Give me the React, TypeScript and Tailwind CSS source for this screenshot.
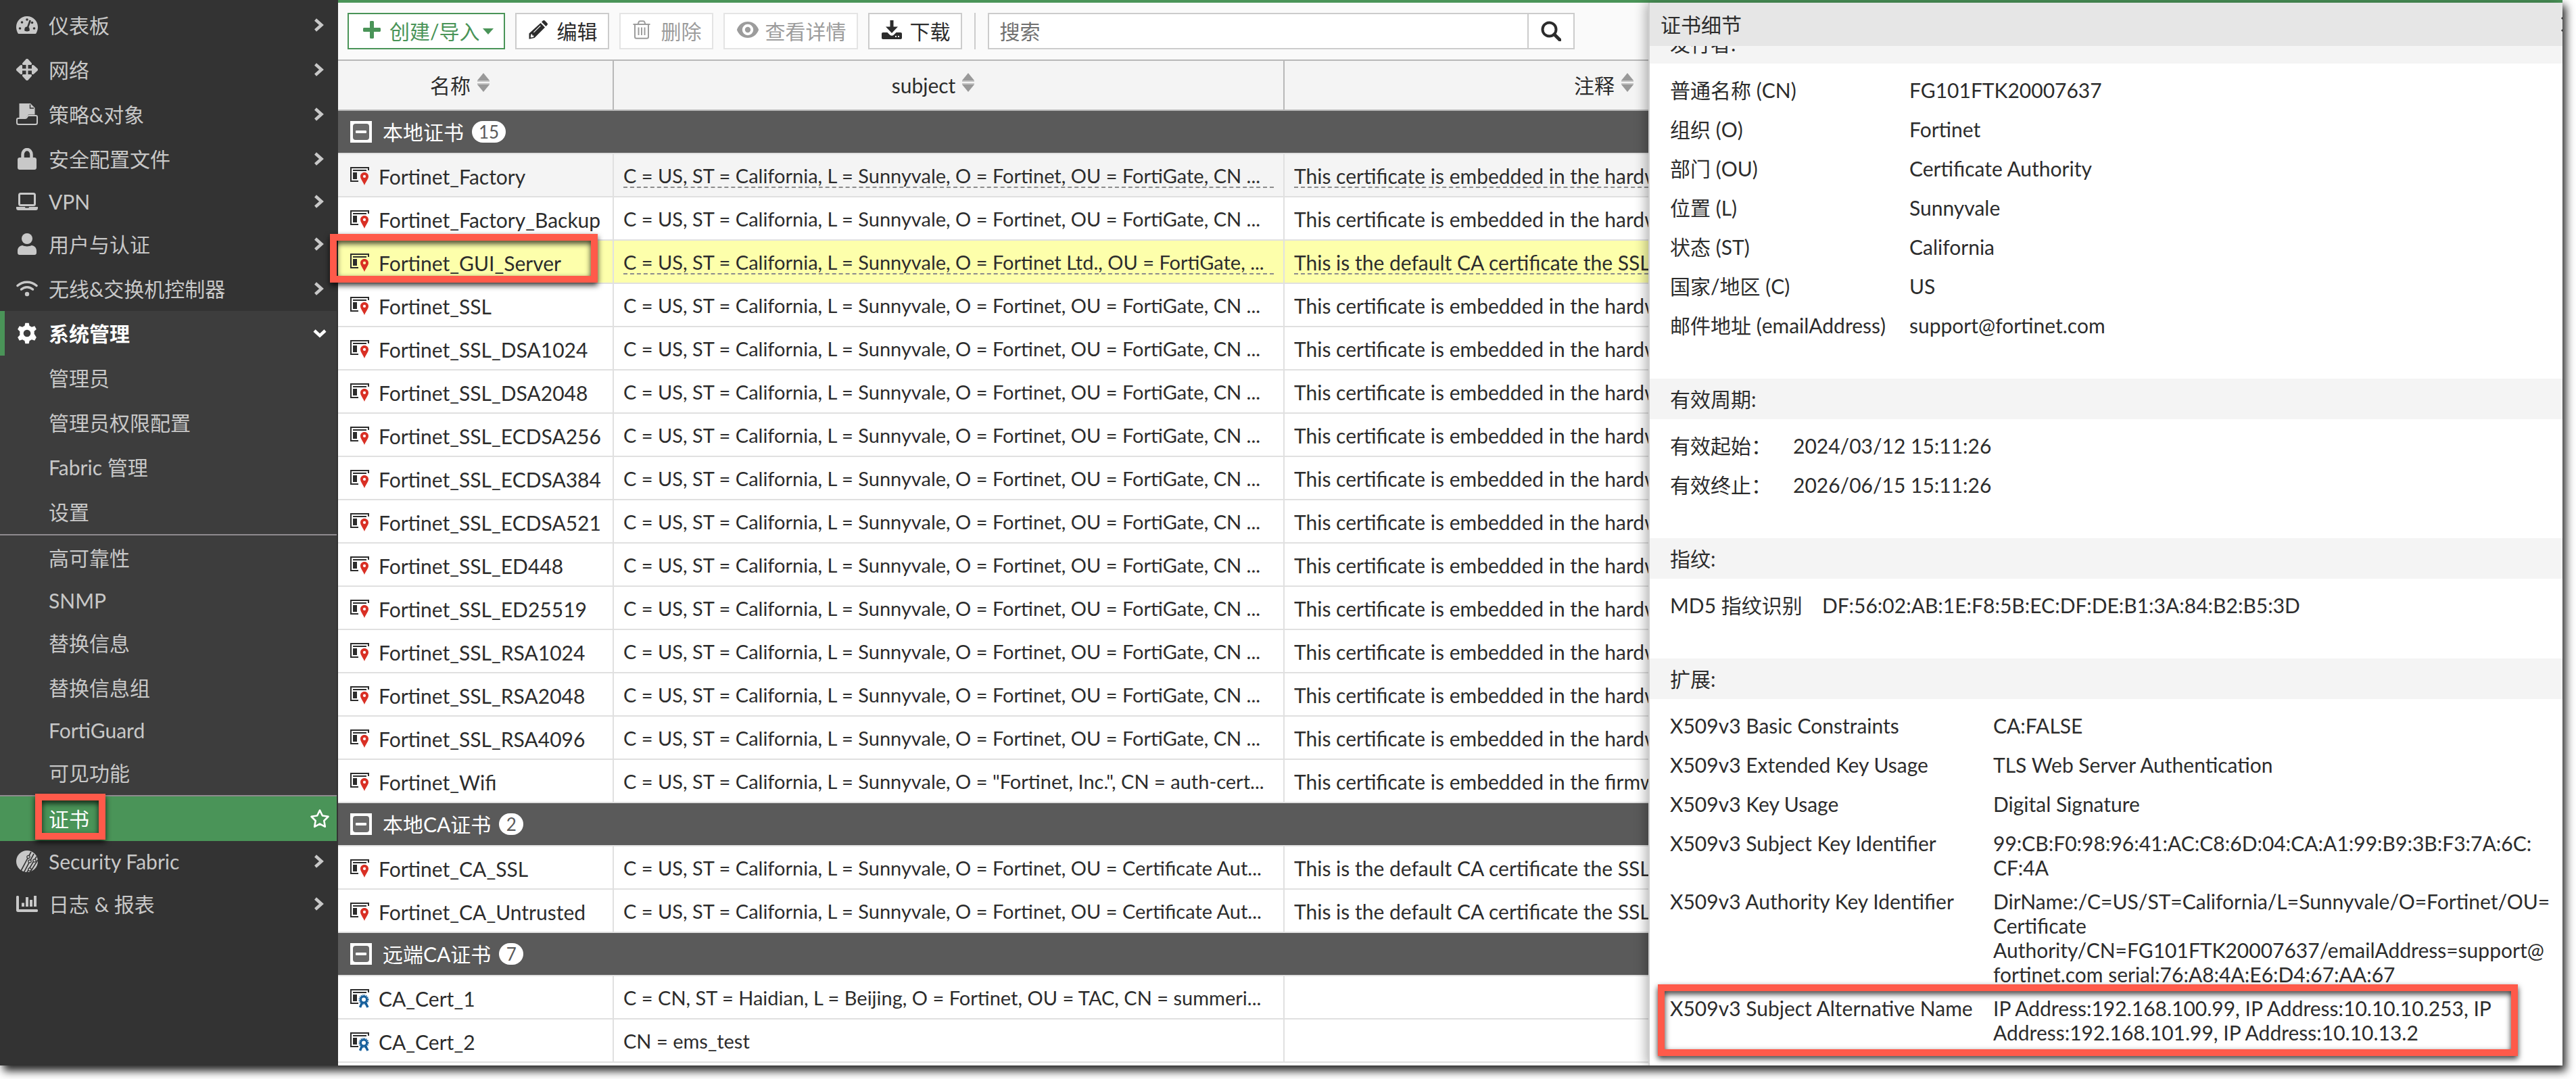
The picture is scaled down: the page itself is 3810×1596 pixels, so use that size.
import type { ReactNode } from "react";

/* ---------- icons ---------- */

const Icon = ({ children }: { children: ReactNode }) => (
  <svg viewBox="0 0 32 32" className="h-8 w-8 shrink-0" fill="currentColor" aria-hidden="true">
    {children}
  </svg>
);

const DashboardIcon = () => (
  <Icon>
    <path d="M16 3C7 3 0 10 0 19c0 3 .8 6 2.2 8.700.4.8 1 1.300 2 1.300h23.600c1 0 1.600-.5 2-1.300C31.200 25 32 22 32 19 32 10 25 3 16 3Z" />
    <g className="fill-[#333333]">
      <circle cx="16" cy="8" r="1.8" />
      <circle cx="8.5" cy="12" r="1.8" />
      <circle cx="23.5" cy="12.5" r="1.8" />
      <circle cx="5.500" cy="21" r="1.8" />
      <circle cx="26.500" cy="21" r="1.8" />
      <circle cx="16" cy="22" r="3.600" />
      <path d="M19.500 8.500 22 9.500 17.800 21h-2.600Z" />
      <path d="M12.500 22h7v3h-7z" />
    </g>
  </Icon>
);

const NetworkIcon = () => (
  <Icon>
    <path d="M14.500 6h3v20h-3zM6 14.500h20v3H6z" />
    <path d="M16 0c1 0 1.500.4 2 1l4.500 5c1.200 1.500.5 3-1 3h-11c-1.500 0-2.200-1.500-1-3L14 1c.5-.6 1-1 2-1ZM16 32c1 0 1.500-.4 2-1l4.500-5c1.200-1.500.5-3-1-3h-11c-1.500 0-2.200 1.500-1 3l4.500 5c.5.6 1 1 2 1ZM0 16c0-1 .4-1.500 1-2l5-4.500c1.500-1.200 3-.5 3 1v11c0 1.500-1.500 2.200-3 1L1 18c-.6-.5-1-1-1-2ZM32 16c0-1-.4-1.500-1-2l-5-4.500c-1.500-1.200-3-.5-3 1v11c0 1.500 1.500 2.200 3 1L31 18c.6-.5 1-1 1-2Z" />
  </Icon>
);

const PolicyIcon = () => (
  <Icon>
    <path d="M4.500 0H21l6.500 6.500V16.500H18l-4 5H4.500Z" />
    <path d="M20.500 1.500v5.500h5.500" fill="none" className="stroke-[#333333]" strokeWidth="1.400" />
    <path
      d="M3 22h10.500c1 0 1.700-.4 2.200-1.300l.8-1.400c.5-.9 1.200-1.300 2.200-1.300H29c1.200 0 2 .8 2 2v8.500c0 1.500-1 2.500-2.500 2.500h-25C2 31 1 30 1 28.500V24c0-1.200.8-2 2-2Z"
      className="fill-[#333333]"
      stroke="currentColor"
      strokeWidth="2"
    />
  </Icon>
);

const LockIcon = () => (
  <Icon>
    <path d="M5 14h22c1.700 0 3 1.300 3 3v12c0 1.700-1.300 3-3 3H5c-1.700 0-3-1.300-3-3V17c0-1.700 1.300-3 3-3Z" />
    <path d="M9.500 16V9.500a6.500 7.500 0 0 1 13 0V16" fill="none" stroke="currentColor" strokeWidth="4.500" />
  </Icon>
);

const LaptopIcon = () => (
  <Icon>
    <rect x="4.500" y="4.500" width="23" height="17" rx="2" fill="none" stroke="currentColor" strokeWidth="3" />
    <path d="M0 24h13c0 1 .8 1.500 1.500 1.500h3c.7 0 1.500-.5 1.500-1.500h13v2c0 1.700-1.300 3-3 3H3c-1.700 0-3-1.300-3-3Z" />
  </Icon>
);

const UserIcon = () => (
  <Icon>
    <circle cx="16" cy="8" r="8" />
    <path d="M9.500 18c2 1 4 1.400 6.500 1.400s4.500-.4 6.500-1.400c4.500.2 7.500 3.500 7.500 8v3c0 1.700-1.300 3-3 3H5c-1.700 0-3-1.300-3-3v-3c0-4.500 3-7.800 7.500-8Z" />
  </Icon>
);

const WifiIcon = () => (
  <Icon>
    <g fill="none" stroke="currentColor" strokeWidth="3.500" strokeLinecap="round">
      <path d="M2 11.500c8-7 20-7 28 0" />
      <path d="M7.500 17c5-4.500 12-4.500 17 0" />
    </g>
    <circle cx="16" cy="24" r="3.200" />
  </Icon>
);

const GearIcon = () => (
  <svg viewBox="0 0 24 24" className="h-8 w-8 shrink-0" fill="currentColor" aria-hidden="true">
    <path
      fillRule="evenodd"
      d="M10 .5h4l.7 3.300c.9.3 1.700.7 2.500 1.300l3.200-1.100 2 3.500-2.500 2.200c.2 1 .2 1.800 0 2.800l2.500 4-2 3.500-3.200-1.100c-.8.6-1.600 1-2.500 1.300L14 23.500h-4l-.7-3.300c-.9-.3-1.700-.7-2.500-1.300L3.600 20l-2-3.500 2.500-2.600c-.2-1-.2-2.800 0-3.800L1.600 7.500 3.600 4l3.200 1.100c.8-.6 1.600-1 2.500-1.300ZM12 8a4 4 0 1 0 0 8 4 4 0 0 0 0-8Z"
    />
  </svg>
);

const FabricIcon = () => (
  <Icon>
    <circle cx="16" cy="16" r="16" />
    <g className="fill-none stroke-[#333333]" strokeWidth="1.600">
      <path d="M6 32 22 2M11 33 26 5M15.500 33 30 9M20 33 32 14" />
    </g>
    <g className="stroke-[#333333]" strokeWidth="1.200">
      <circle cx="18" cy="9.500" r="2.200" />
      <circle cx="20" cy="16" r="2.200" />
      <circle cx="27" cy="15" r="2.200" />
      <circle cx="20" cy="28" r="2.200" />
    </g>
  </Icon>
);

const ReportIcon = () => (
  <Icon>
    <path d="M0 5.500C0 4.700.7 4 1.500 4h1C3.300 4 4 4.700 4 5.500V24h26.500c.8 0 1.500.7 1.500 1.500v1c0 .8-.7 1.500-1.500 1.500H2.500C1 28 0 27 0 25.500Z" />
    <path d="M8 14.500h4V20H8zM14 6h4v14h-4zM20 10h4v10h-4zM26 4h4v16h-4z" />
  </Icon>
);

const ChevronRight = () => (
  <svg viewBox="0 0 16 20" className="mr-1 h-5 w-4" fill="none" stroke="currentColor" strokeWidth="4.500" aria-hidden="true">
    <path d="m2.500 2 9 8-9 8" />
  </svg>
);

const ChevronDown = () => (
  <svg viewBox="0 0 20 14" className="h-3.5 w-5" fill="none" stroke="currentColor" strokeWidth="4.500" aria-hidden="true">
    <path d="m2 3 8 7.500L18 3" />
  </svg>
);

const StarIcon = () => (
  <svg viewBox="0 0 30 30" className="h-[30px] w-[30px]" fill="none" stroke="currentColor" strokeWidth="2.600" strokeLinejoin="round" aria-hidden="true">
    <path d="m15 2.500 3.900 8 8.600 1.300-6.200 6.200 1.500 8.800L15 22.600l-7.800 4.200 1.500-8.800-6.200-6.200 8.600-1.300Z" />
  </svg>
);

const SortIcon = () => (
  <svg viewBox="0 0 18 28" className="mb-2 h-7 w-[18px]" aria-hidden="true">
    <path d="m9 0 9 11H0Z" className="fill-[#999999]" />
    <path d="M0 11h18v2H0zM0 15h18v2H0z" className="fill-[#c4c4c4]" />
    <path d="M0 17h18L9 28Z" className="fill-[#999999]" />
  </svg>
);

const CertIcon = ({ kind }: { kind: "pin" | "ribbon" }) => (
  <svg viewBox="0 0 28 28" className="h-7 w-7 shrink-0" aria-hidden="true">
    <path d="M0 0h28v5h-2V2H2v18h10v2H0Z" className="fill-[#2c2c2c]" />
    <path d="M4 4h20v2H4zM4 8h6v10H4z" className="fill-[#2c2c2c]" />
    {kind === "pin" ? (
      <path
        fillRule="evenodd"
        className="fill-[#d93025]"
        d="M21 8c3.500 0 6 2.600 6 5.800 0 4-3.500 7.200-6 13.200-2.500-6-6-9.200-6-13.200C15 10.600 17.500 8 21 8Zm0 3.800a2.100 2.100 0 1 0 0 4.200 2.100 2.100 0 0 0 0-4.200Z"
      />
    ) : (
      <g className="stroke-[#17609c]" fill="none">
        <path d="m17.500 20-3 7M22.500 20l3.500 7" strokeWidth="3.500" />
        <circle cx="20" cy="15.500" r="4.500" strokeWidth="3" />
        <circle cx="20" cy="15.500" r="6.500" strokeWidth="2" strokeDasharray="1.400 1.150" />
      </g>
    )}
  </svg>
);

const CollapseIcon = () => (
  <svg viewBox="0 0 32 32" className="h-8 w-8" aria-hidden="true">
    <path d="M0 0h32v32H0z" className="fill-white" />
    <rect x="4" y="4" width="24" height="24" rx="4" className="fill-[#6a6a6a]" />
    <rect x="8" y="14" width="16" height="4" rx="1" className="fill-white" />
  </svg>
);

const PlusIcon = () => (
  <svg viewBox="-3 0 30 26" className="h-[26px] w-[30px]" fill="currentColor" aria-hidden="true">
    <path d="M10 1.500C10 .7 10.700 0 11.500 0h3c.8 0 1.500.7 1.500 1.500V10h8.500c.8 0 1.500.7 1.500 1.500v3c0 .8-.7 1.500-1.500 1.500H16v8.500c0 .8-.7 1.500-1.500 1.500h-3c-.8 0-1.500-.7-1.500-1.500V16H1.500C.7 16 0 15.300 0 14.500v-3C0 10.700.7 10 1.500 10H10Z" />
  </svg>
);

const PencilIcon = () => (
  <svg viewBox="0 0 28 28" className="h-7 w-7" fill="currentColor" aria-hidden="true">
    <path d="M19 2.500 21 .6c.8-.8 2-.8 2.800 0l3.600 3.600c.8.8.8 2 0 2.800L25.500 9Z" />
    <path fillRule="evenodd" d="M17.600 4 24 10.400 8.500 26l-8 1.800V19.500ZM3.500 20.500 2.700 25l.7.6 3.900-.8v-2.300H5.200v-2ZM17 7.500 7 17.500l.8.8 10-10Z" />
  </svg>
);

const TrashIcon = () => (
  <svg viewBox="0 0 26 28" className="h-7 w-[26px]" fill="none" stroke="currentColor" strokeWidth="2" aria-hidden="true">
    <path d="M.5 6h25M3 6v18.500c0 1.400.9 2.300 2.300 2.300h15.400c1.400 0 2.300-.9 2.300-2.300V6M7.500 6l1.300-3.600c.3-.9.8-1.200 1.700-1.200h5c.9 0 1.400.3 1.700 1.200L18.500 6" />
    <path d="M8.500 10.500V22M13 10.500V22M17.500 10.500V22" />
  </svg>
);

const EyeIcon = () => (
  <svg viewBox="0 0 32 28" className="h-7 w-8" fill="currentColor" aria-hidden="true">
    <path
      fillRule="evenodd"
      d="M16 2C8.500 2 3 6.500.3 12.800c-.4.9-.4 1.500 0 2.400C3 21.500 8.500 26 16 26s13-4.500 15.700-10.800c.4-.9.4-1.500 0-2.400C29 6.500 23.500 2 16 2Zm0 3.800a8.200 8.200 0 1 0 0 16.400 8.200 8.200 0 0 0 0-16.400Z"
    />
    <circle cx="16" cy="14" r="4.200" />
  </svg>
);

const DownloadIcon = () => (
  <svg viewBox="0 0 30 28" className="h-7 w-[30px]" fill="currentColor" aria-hidden="true">
    <path d="M12.500 0h5v9.500H24L15 19 6 9.500h6.500Z" />
    <path fillRule="evenodd" d="M2 18h6.500l3.500 3.500c1.800 1.600 4.200 1.600 6 0l3.500-3.500H28c1.200 0 2 .8 2 2v6c0 1.200-.8 2-2 2H2c-1.200 0-2-.8-2-2v-6c0-1.200.8-2 2-2Zm18 5v2h2v-2Zm4 0v2h2v-2Z" />
  </svg>
);

const SearchIcon = () => (
  <svg viewBox="0 0 30 30" className="h-[30px] w-[30px]" fill="none" stroke="currentColor" strokeWidth="4" aria-hidden="true">
    <circle cx="12.500" cy="12.500" r="10" />
    <path d="m20 20 8 8" strokeLinecap="round" strokeWidth="5" />
  </svg>
);

/* ---------- data ---------- */

const topMenu = [
  { label: "仪表板", icon: <DashboardIcon /> },
  { label: "网络", icon: <NetworkIcon /> },
  { label: "策略&对象", icon: <PolicyIcon /> },
  { label: "安全配置文件", icon: <LockIcon /> },
  { label: "VPN", icon: <LaptopIcon />, latin: true },
  { label: "用户与认证", icon: <UserIcon /> },
  { label: "无线&交换机控制器", icon: <WifiIcon /> },
];

const bottomMenu = [
  { label: "Security Fabric", icon: <FabricIcon />, latin: true },
  { label: "日志 & 报表", icon: <ReportIcon /> },
];

const systemMenu = [
  [{ label: "管理员" }, { label: "管理员权限配置" }, { label: "Fabric 管理" }, { label: "设置" }],
  [
    { label: "高可靠性" },
    { label: "SNMP", latin: true },
    { label: "替换信息" },
    { label: "替换信息组" },
    { label: "FortiGuard", latin: true },
    { label: "可见功能" },
  ],
];

type Cert = { name: string; subject: string; comment: string; state?: "hover" | "selected" };

const fortigate = "C = US, ST = California, L = Sunnyvale, O = Fortinet, OU = FortiGate, CN ...";
const authority = "C = US, ST = California, L = Sunnyvale, O = Fortinet, OU = Certificate Aut...";
const hardware = "This certificate is embedded in the hardware";
const defaultCa = "This is the default CA certificate the SSL";

const groups: { title: string; count: number; kind: "pin" | "ribbon"; certs: Cert[] }[] = [
  {
    title: "本地证书",
    count: 15,
    kind: "pin",
    certs: [
      { name: "Fortinet_Factory", subject: fortigate, comment: hardware, state: "hover" },
      { name: "Fortinet_Factory_Backup", subject: fortigate, comment: hardware },
      {
        name: "Fortinet_GUI_Server",
        subject: "C = US, ST = California, L = Sunnyvale, O = Fortinet Ltd., OU = FortiGate, ...",
        comment: defaultCa,
        state: "selected",
      },
      { name: "Fortinet_SSL", subject: fortigate, comment: hardware },
      { name: "Fortinet_SSL_DSA1024", subject: fortigate, comment: hardware },
      { name: "Fortinet_SSL_DSA2048", subject: fortigate, comment: hardware },
      { name: "Fortinet_SSL_ECDSA256", subject: fortigate, comment: hardware },
      { name: "Fortinet_SSL_ECDSA384", subject: fortigate, comment: hardware },
      { name: "Fortinet_SSL_ECDSA521", subject: fortigate, comment: hardware },
      { name: "Fortinet_SSL_ED448", subject: fortigate, comment: hardware },
      { name: "Fortinet_SSL_ED25519", subject: fortigate, comment: hardware },
      { name: "Fortinet_SSL_RSA1024", subject: fortigate, comment: hardware },
      { name: "Fortinet_SSL_RSA2048", subject: fortigate, comment: hardware },
      { name: "Fortinet_SSL_RSA4096", subject: fortigate, comment: hardware },
      {
        name: "Fortinet_Wifi",
        subject: 'C = US, ST = California, L = Sunnyvale, O = "Fortinet, Inc.", CN = auth-cert...',
        comment: "This certificate is embedded in the firmware",
      },
    ],
  },
  {
    title: "本地CA证书",
    count: 2,
    kind: "pin",
    certs: [
      { name: "Fortinet_CA_SSL", subject: authority, comment: defaultCa },
      { name: "Fortinet_CA_Untrusted", subject: authority, comment: defaultCa },
    ],
  },
  {
    title: "远端CA证书",
    count: 7,
    kind: "ribbon",
    certs: [
      { name: "CA_Cert_1", subject: "C = CN, ST = Haidian, L = Beijing, O = Fortinet, OU = TAC, CN = summeri...", comment: "" },
      { name: "CA_Cert_2", subject: "CN = ems_test", comment: "" },
    ],
  },
];

type Field = { label: string; value: string; marked?: boolean };

const sections: { title: string; labelWidth: string; fields: Field[] }[] = [
  {
    title: "发行者:",
    labelWidth: "w-[354px]",
    fields: [
      { label: "普通名称 (CN)", value: "FG101FTK20007637" },
      { label: "组织 (O)", value: "Fortinet" },
      { label: "部门 (OU)", value: "Certificate Authority" },
      { label: "位置 (L)", value: "Sunnyvale" },
      { label: "状态 (ST)", value: "California" },
      { label: "国家/地区 (C)", value: "US" },
      { label: "邮件地址 (emailAddress)", value: "support@fortinet.com" },
    ],
  },
  {
    title: "有效周期:",
    labelWidth: "w-[182px]",
    fields: [
      { label: "有效起始：", value: "2024/03/12 15:11:26" },
      { label: "有效终止：", value: "2026/06/15 15:11:26" },
    ],
  },
  {
    title: "指纹:",
    labelWidth: "w-[225px]",
    fields: [{ label: "MD5 指纹识别", value: "DF:56:02:AB:1E:F8:5B:EC:DF:DE:B1:3A:84:B2:B5:3D" }],
  },
  {
    title: "扩展:",
    labelWidth: "w-[478px]",
    fields: [
      { label: "X509v3 Basic Constraints", value: "CA:FALSE" },
      { label: "X509v3 Extended Key Usage", value: "TLS Web Server Authentication" },
      { label: "X509v3 Key Usage", value: "Digital Signature" },
      { label: "X509v3 Subject Key Identifier", value: "99:CB:F0:98:96:41:AC:C8:6D:04:CA:A1:99:B9:3B:F3:7A:6C:\nCF:4A" },
      {
        label: "X509v3 Authority Key Identifier",
        value:
          "DirName:/C=US/ST=California/L=Sunnyvale/O=Fortinet/OU=\nCertificate\nAuthority/CN=FG101FTK20007637/emailAddress=support@\nfortinet.com serial:76:A8:4A:E6:D4:67:AA:67",
      },
      {
        label: "X509v3 Subject Alternative Name",
        value: "IP Address:192.168.100.99, IP Address:10.10.10.253, IP\nAddress:192.168.101.99, IP Address:10.10.13.2",
        marked: true,
      },
    ],
  },
];

/* ---------- sidebar ---------- */

const MenuItem = ({ label, icon, latin }: { label: string; icon: ReactNode; latin?: boolean }) => (
  <a href="#" className={`flex items-center gap-4 pr-[14px] pl-6 ${latin ? "py-3" : "py-[15px]"}`}>
    {icon}
    <span className="flex-1">{label}</span>
    <ChevronRight />
  </a>
);

const Sidebar = () => (
  <nav className="w-[500px] shrink-0 bg-[#333333] pt-1 pr-[2px] text-[#c8c8c8]">
    {topMenu.map((item) => (
      <MenuItem key={item.label} {...item} />
    ))}
    <div className="bg-[#3d3d3d]">
      <a href="#" className="flex items-center gap-4 border-l-[7px] border-[#4a9458] py-[15px] pr-[15px] pl-[17px] font-bold text-white">
        <GearIcon />
        <span className="flex-1">系统管理</span>
        <ChevronDown />
      </a>
      {systemMenu.map((items, i) => (
        <div key={i} className="border-b-2 border-[#8f8b8f]">
          {items.map((item) => (
            <a key={item.label} href="#" className={`block pl-[72px] ${item.latin ? "py-3" : "py-[15px]"}`}>
              {item.label}
            </a>
          ))}
        </div>
      ))}
    </div>
    <a href="#" className="relative flex items-center bg-[#4a9458] py-[15px] pr-[10px] pl-[72px] text-white">
      <span className="flex-1">证书</span>
      <StarIcon />
      <span className="absolute -top-1 left-[52px] h-[68px] w-[104px] border-[10px] border-[#ff5a4a] drop-shadow-[0_4px_4px_rgba(0,0,0,0.8)]" />
    </a>
    {bottomMenu.map((item) => (
      <MenuItem key={item.label} {...item} />
    ))}
  </nav>
);

/* ---------- certificate list ---------- */

const buttonBase = "flex h-[54px] shrink-0 items-center border-2 bg-white pr-[15px] pl-[18px] [&>svg:first-child]:mb-1";

const Toolbar = () => (
  <div className="flex h-[86px] items-center gap-[15px] border-b-2 border-[#b8b8b8] bg-[#fafafa] pl-[14px] whitespace-nowrap">
    <button className={`${buttonBase} gap-3 border-[#4a9458] text-[#4a9458]`}>
      <PlusIcon />
      <span>创建/导入</span>
      <svg viewBox="0 0 16 9" className="-ml-2 h-[9px] w-4" fill="currentColor" aria-hidden="true">
        <path d="M0 0h16L8 9Z" />
      </svg>
    </button>
    <button className={`${buttonBase} gap-[14px] border-[#cccccc]`}>
      <PencilIcon />
      编辑
    </button>
    <button disabled className={`${buttonBase} gap-4 border-[#e4e4e4] text-[#9c9c9c]`}>
      <TrashIcon />
      删除
    </button>
    <button disabled className={`${buttonBase} gap-[10px] border-[#e4e4e4] text-[#9c9c9c]`}>
      <EyeIcon />
      查看详情
    </button>
    <button className={`${buttonBase} gap-3 border-[#cccccc]`}>
      <DownloadIcon />
      下载
    </button>
    <span className="mx-[3px] h-[54px] w-[2px] shrink-0 bg-[#cccccc]" />
    <form className="flex h-[54px] shrink-0">
      <input
        type="text"
        aria-label="搜索"
        placeholder="搜索"
        className="w-[800px] border-2 border-[#cccccc] bg-white px-4 placeholder:text-[#707070]"
      />
      <button type="button" aria-label="搜索" className="flex w-[68px] items-center justify-center border-2 border-l-0 border-[#cccccc] bg-white">
        <SearchIcon />
      </button>
    </form>
  </div>
);

const HeadCell = ({ label, width, align }: { label: string; width: string; align: string }) => (
  <th scope="col" className={`border-b-2 border-[#b8b8b8] p-0 font-normal ${width}`}>
    <span className={`flex items-center gap-[10px] ${align}`}>
      {label}
      <SortIcon />
    </span>
  </th>
);

const rowStyle = { hover: "bg-[#f4f4f4]", selected: "bg-[#fdffab]" };

const CertRow = ({ cert, kind }: { cert: Cert; kind: "pin" | "ribbon" }) => {
  const hint = cert.state ? "border-dashed border-[#8c8c8c]" : "border-transparent";
  return (
    <tr className={`h-16 ${cert.state ? rowStyle[cert.state] : "bg-white"}`}>
      <td className="relative border-r-2 border-b-2 border-[#e0e0e0] px-[18px] pt-1 pb-0">
        <span className="flex items-center gap-[14px]">
          <CertIcon kind={kind} />
          {cert.name}
        </span>
        {cert.state === "selected" && (
          <span className="absolute -top-[10px] -left-3 z-10 h-[72px] w-[396px] border-[10px] border-[#ff5a4a] drop-shadow-[0_4px_4px_rgba(0,0,0,0.8)]" />
        )}
      </td>
      <td className="border-r-2 border-b-2 border-[#e0e0e0] px-[14px] pt-1 pb-0">
        <div className={`truncate border-b-2 text-[29px] leading-8 ${hint}`}>{cert.subject}</div>
      </td>
      <td className="border-b-2 border-[#e0e0e0] pt-1 pr-0 pb-0 pl-[14px]">
        {cert.comment && (
          <div className={`overflow-hidden border-b-2 leading-8 whitespace-nowrap ${hint}`}>{cert.comment}</div>
        )}
      </td>
    </tr>
  );
};

const CertTable = () => (
  <table className="w-full table-fixed border-separate border-spacing-0">
    <thead>
      <tr className="h-[74px] bg-[#f4f4f4]">
        <HeadCell label="名称" width="w-[408px] border-r-2" align="justify-center pr-[46px]" />
        <HeadCell label="subject" width="w-[992px] border-r-2" align="justify-center pr-[46px]" />
        <HeadCell label="注释" width="w-auto" align="justify-end pr-[22px]" />
      </tr>
    </thead>
    {groups.map((group) => (
      <tbody key={group.title}>
        <tr className="h-16 bg-[#5a5a5a] text-white">
          <th scope="rowgroup" colSpan={3} className="border-b-2 border-[#e0e0e0] px-[18px] py-0 text-left font-normal">
            <span className="flex items-center gap-4">
              <button aria-label="折叠">
                <CollapseIcon />
              </button>
              {group.title}
              <span className="-ml-1 min-w-9 rounded-full bg-white px-[10px] text-center text-[26px] leading-8 text-[#5a5a5a]">
                {group.count}
              </span>
            </span>
          </th>
        </tr>
        {group.certs.map((cert) => (
          <CertRow key={cert.name} cert={cert} kind={group.kind} />
        ))}
      </tbody>
    ))}
  </table>
);

/* ---------- detail panel ---------- */

const DetailPanel = () => (
  <aside className="z-20 flex w-[1352px] shrink-0 flex-col border-l-2 border-[#cfcfcf] bg-white shadow-[-4px_0_16px_rgba(0,0,0,0.3)]">
    <header className="flex h-16 shrink-0 items-center justify-between bg-[#e6e6e6] pl-4">
      <h2>证书细节</h2>
      <button aria-label="关闭" className="-mr-5">
        <svg viewBox="0 0 22 22" className="h-[22px] w-[22px]" stroke="currentColor" strokeWidth="3" aria-hidden="true">
          <path d="m1 1 20 20M21 1 1 21" />
        </svg>
      </button>
    </header>
    {/* scrolled to the end, so the content hangs from the bottom edge */}
    <div className="flex min-h-0 flex-1 flex-col justify-end overflow-hidden">
      {sections.map((section) => (
        <section key={section.title} className="shrink-0 pb-12 last:pb-[26px]">
          <h3 className="bg-[#f4f4f4] py-3 pl-[30px]">{section.title}</h3>
          <dl className="pt-3">
            {section.fields.map((field) => (
              <div key={field.label} className="relative flex min-h-[58px] pt-[9px] pr-3 pb-[5px] pl-[30px]">
                <dt className={`shrink-0 ${section.labelWidth}`}>{field.label}</dt>
                <dd className="min-w-0 flex-1 wrap-break-word whitespace-pre-line">{field.value}</dd>
                {field.marked && (
                  <span className="absolute -top-2 left-3 h-[106px] w-[1272px] border-[10px] border-[#ff5a4a] drop-shadow-[0_4px_4px_rgba(0,0,0,0.8)]" />
                )}
              </div>
            ))}
          </dl>
        </section>
      ))}
    </div>
  </aside>
);

export default function App() {
  return (
    <div
      lang="zh-CN"
      className="h-screen overflow-hidden bg-white pr-5 pb-5 text-[30px] leading-9 text-[#2c2c2c] [font-family:Lato,'Noto_Sans_CJK_SC',sans-serif]"
    >
      <div className="h-full shadow-[5px_8px_12px_rgba(0,0,0,0.85)]">
        <div className="flex h-full overflow-hidden bg-white">
          <Sidebar />
          <div className="flex min-w-0 flex-1 border-t-4 border-[#4a9458]">
            <main className="min-w-0 flex-1">
              <Toolbar />
              <CertTable />
            </main>
            <DetailPanel />
          </div>
        </div>
      </div>
    </div>
  );
}
